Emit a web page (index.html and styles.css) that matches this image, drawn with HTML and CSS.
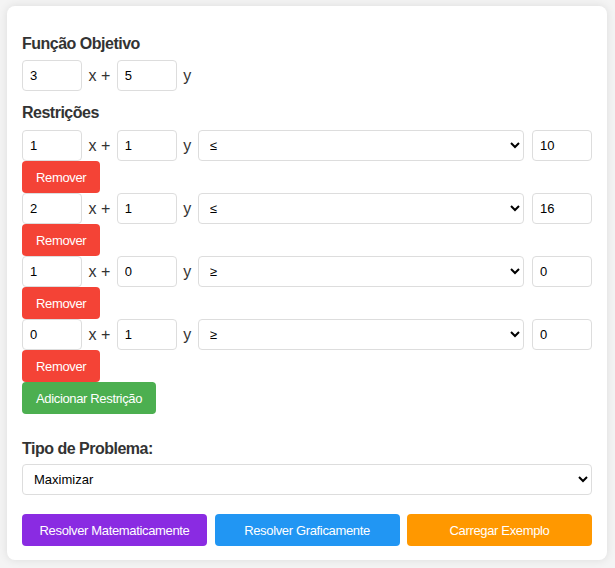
FILE: index.html
```html
<!DOCTYPE html>
<html lang="pt">
<head>
<meta charset="utf-8">
<link rel="stylesheet" href="styles.css">
</head>
<body>
<div class="card">
  <h3 class="title first">Função Objetivo</h3>
  <div class="row">
    <input class="num" type="text" value="3">
    <span class="lbl">x +</span>
    <input class="num" type="text" value="5">
    <span class="lbl">y</span>
  </div>

  <h3 class="title">Restrições</h3>
  <div class="constraint">
    <div class="row">
      <input class="num" type="text" value="1">
      <span class="lbl">x +</span>
      <input class="num" type="text" value="1">
      <span class="lbl">y</span>
      <select class="sel"><option>≤</option><option>≥</option><option>=</option></select>
      <input class="num" type="text" value="10">
    </div>
    <button class="btn red">Remover</button>
  </div>
  <div class="constraint">
    <div class="row">
      <input class="num" type="text" value="2">
      <span class="lbl">x +</span>
      <input class="num" type="text" value="1">
      <span class="lbl">y</span>
      <select class="sel"><option>≤</option><option>≥</option><option>=</option></select>
      <input class="num" type="text" value="16">
    </div>
    <button class="btn red">Remover</button>
  </div>
  <div class="constraint">
    <div class="row">
      <input class="num" type="text" value="1">
      <span class="lbl">x +</span>
      <input class="num" type="text" value="0">
      <span class="lbl">y</span>
      <select class="sel"><option>≥</option><option>≤</option><option>=</option></select>
      <input class="num" type="text" value="0">
    </div>
    <button class="btn red">Remover</button>
  </div>
  <div class="constraint">
    <div class="row">
      <input class="num" type="text" value="0">
      <span class="lbl">x +</span>
      <input class="num" type="text" value="1">
      <span class="lbl">y</span>
      <select class="sel"><option>≥</option><option>≤</option><option>=</option></select>
      <input class="num" type="text" value="0">
    </div>
    <button class="btn red">Remover</button>
  </div>
  <button class="btn green">Adicionar Restrição</button>

  <h3 class="title tipo">Tipo de Problema:</h3>
  <select class="sel full"><option>Maximizar</option><option>Minimizar</option></select>

  <div class="actions">
    <button class="btn purple">Resolver Matematicamente</button>
    <button class="btn blue">Resolver Graficamente</button>
    <button class="btn orange">Carregar Exemplo</button>
  </div>
</div>
</body>
</html>
```

FILE: styles.css
```css
html, body {
  margin: 0;
  padding: 0;
}
body {
  background: #f4f4f4;
  font-family: "Liberation Sans", Arial, sans-serif;
  padding: 6px 8px 8px 7px;
}
.card {
  background: #fff;
  width: 600px;
  box-sizing: border-box;
  border-radius: 8px;
  padding: 15px 15px 14px;
  box-shadow: 0 0 10px rgba(0, 0, 0, 0.1);
}
.title {
  font-size: 16px;
  line-height: 18px;
  font-weight: bold;
  color: #333;
  letter-spacing: -0.5px;
  margin: 13px 0 8px;
}
.title.first {
  margin-top: 14px;
  margin-bottom: 7px;
}
.title.tipo {
  margin-top: 26px;
  margin-bottom: 6px;
}
.row {
  display: flex;
  align-items: center;
  gap: 6.5px;
}
.lbl {
  font-size: 16px;
  color: #333;
}
.num {
  width: 60px;
  height: 31px;
  box-sizing: border-box;
  border: 1px solid #ddd;
  border-radius: 4px;
  padding: 0 7px;
  font-family: "Liberation Sans", Arial, sans-serif;
  font-size: 13px;
  color: #000;
  background: #fff;
  margin: 0;
}
.row .num:last-child {
  margin-left: 1.5px;
}
.sel {
  flex: 1;
  height: 31px;
  box-sizing: border-box;
  border: 1px solid #ddd;
  border-radius: 4px;
  padding: 0 7px;
  font-family: "Liberation Sans", Arial, sans-serif;
  font-size: 13px;
  color: #000;
  background: #fff;
  margin: 0;
}
.sel.full {
  display: block;
  width: 100%;
}
.btn {
  display: block;
  height: 32px;
  border: none;
  border-radius: 4px;
  padding: 0 14px;
  font-family: "Liberation Sans", Arial, sans-serif;
  font-size: 13px;
  letter-spacing: -0.35px;
  white-space: nowrap;
  color: #fff;
  cursor: pointer;
  margin: 0;
}
.red { background: #f44336; }
.green { background: #4caf50; }
.purple { background: #8a2be2; }
.blue { background: #2196f3; }
.orange { background: #ff9800; }
.actions {
  display: grid;
  grid-template-columns: 1fr 1fr 1fr;
  gap: 7.5px;
  margin-top: 19px;
}
.actions .btn {
  width: 100%;
  padding: 0 8px;
}
```
